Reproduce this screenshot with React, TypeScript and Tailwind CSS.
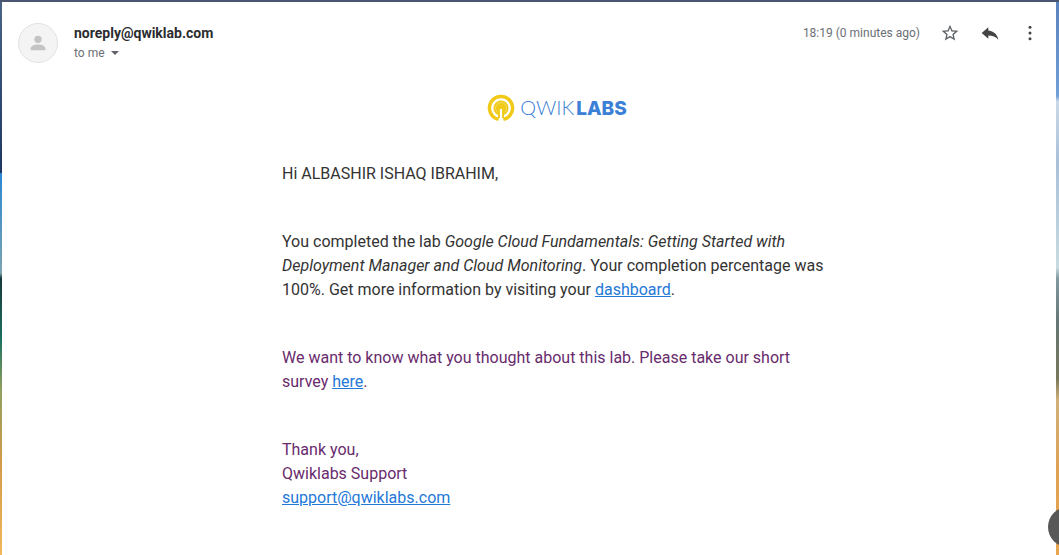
import React from "react";

function Avatar() {
  return (
    <div className="flex size-10 shrink-0 items-center justify-center rounded-full border border-[#e2e2e2] bg-[#f4f4f4]">
      <svg viewBox="0 0 24 24" className="size-[22px]" fill="#c4c4c4" aria-hidden="true">
        <circle cx="12" cy="8" r="4" />
        <path d="M4 20v-2.2C4 15 8.500 13.600 12 13.600S20 15 20 17.800V20z" />
      </svg>
    </div>
  );
}

function MessageHeader() {
  return (
    <header className="flex items-start pt-[21px] pr-[16px] pl-4">
      <Avatar />
      <div className="ml-4 flex min-w-0 flex-1 flex-col">
        <h3 className="text-[14px] leading-5 font-bold text-[#2b2c30]">noreply@qwiklab.com</h3>
        <button type="button" className="flex items-center gap-1 self-start text-[12px] leading-5 text-[#6b6f74]">
          to me
          <svg viewBox="0 0 12 12" className="size-3" fill="#5f6368" aria-hidden="true">
            <path d="M2 4h8L6 8z" />
          </svg>
        </button>
      </div>
      <div className="flex h-5 items-center gap-5">
        <time className="text-[12px] leading-5 text-[#6b6f74]">18:19 (0 minutes ago)</time>
        <button type="button" aria-label="Star">
          <svg viewBox="0 0 24 24" className="size-5" fill="#5f6368">
            <path d="M22 9.240l-7.190-.620L12 2 9.190 8.630 2 9.240l5.460 4.730L5.820 21 12 17.270 18.180 21l-1.630-7.030L22 9.240zM12 15.400l-3.760 2.270 1-4.280-3.320-2.880 4.380-.380L12 6.100l1.710 4.040 4.380.380-3.320 2.880 1 4.280L12 15.400z" />
          </svg>
        </button>
        <button type="button" aria-label="Reply">
          <svg viewBox="0 0 24 24" className="size-5" fill="#444444">
            <path d="M10 9V5l-8 7 8 7v-4.100c5 0 9 1.600 12 5.100-1-5-4-10-12-11z" />
          </svg>
        </button>
        <button type="button" aria-label="More">
          <svg viewBox="0 0 24 24" className="size-5" fill="#444444">
            <circle cx="12" cy="5" r="1.800" />
            <circle cx="12" cy="12" r="1.800" />
            <circle cx="12" cy="19" r="1.800" />
          </svg>
        </button>
      </div>
    </header>
  );
}

function Logo() {
  return (
    <div className="flex h-7 items-center justify-center gap-[5px]">
      <svg viewBox="0 0 28 28" className="size-7" aria-hidden="true">
        <path d="M11.600 25.300A11.550 11.550 0 1 1 16.400 25.300" fill="none" stroke="#f0ca17" strokeWidth="3.500" />
        <circle cx="14" cy="14" r="7.600" fill="#f0ca17" />
        <path d="M10.600 18.500A5.500 5.500 0 1 1 17.400 18.500" fill="none" stroke="#f5dc66" strokeWidth="1" />
        <path d="M12.400 15.500v8.500M15.600 15.500v8.500" stroke="#f0ca17" strokeWidth="2.800" />
        <path d="M14 15v13" stroke="#fff" strokeWidth="2.200" />
      </svg>
      <div className="flex items-baseline gap-[2px] leading-7 text-[#3b80d6]">
        <span className="font-['Lato',sans-serif] text-[20px] font-light">QWIK</span>
        <span className="font-['Inter',sans-serif] text-[19px] font-extrabold">LABS</span>
      </div>
    </div>
  );
}

function MailLink({ href, children }: { href: string; children: React.ReactNode }) {
  return (
    <a href={href} className="text-[#2478d8] underline">
      {children}
    </a>
  );
}

export default function App() {
  return (
    <div className="flex min-h-screen overflow-hidden bg-[#4a5570] pt-[2px] font-['Roboto',sans-serif]">
      <div className="w-[2px] shrink-0 bg-[linear-gradient(180deg,#4a6284_0%,#1d3763_31%,#2b87d3_31%,#7ba4ae_49%,#17383c_50%,#1c7060_61%,#8fa05f_70%,#d29a4b_83%,#f0b75b_100%)]" />
      <main className="min-w-0 flex-1 bg-white pb-[44px]">
        <MessageHeader />
        <article className="pr-4 pl-[72px] text-[16px] leading-6 text-[#333333]">
          <div className="mx-auto flex max-w-[550px] flex-col gap-[44px] pt-[31px]">
            <div className="flex flex-col gap-[40px]">
              <Logo />
              <p>Hi ALBASHIR ISHAQ IBRAHIM,</p>
            </div>
            <p>
              You completed the lab <em>Google Cloud Fundamentals: Getting Started with Deployment Manager and Cloud Monitoring</em>. Your completion percentage was 100%. Get more information by visiting your <MailLink href="#dashboard">dashboard</MailLink>.
            </p>
            <p className="text-[#682b6d]">
              We want to know what you thought about this lab. Please take our short survey <MailLink href="#survey">here</MailLink>.
            </p>
            <p className="text-[#682b6d]">
              Thank you,
              <br />
              Qwiklabs Support
              <br />
              <MailLink href="mailto:support@qwiklabs.com">support@qwiklabs.com</MailLink>
            </p>
          </div>
        </article>
      </main>
      <div className="w-[3px] shrink-0 bg-[linear-gradient(180deg,#5b83be_0%,#719fd8_17%,#cbd9e8_18%,#a9c0d9_29%,#c7dbe0_48%,#8299a1_50%,#657674_58%,#77775b_68%,#d0b078_72%,#dfa153_85%,#e9a64f_100%)]" />
      <div className="fixed -right-[29px] bottom-2 size-10 rounded-full bg-[#585858]" />
    </div>
  );
}
